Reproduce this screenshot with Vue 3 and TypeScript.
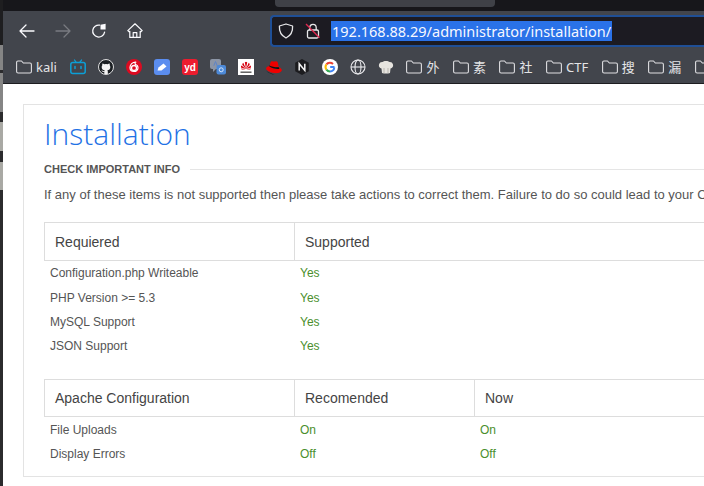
<script setup lang="ts">
type Mark =
  | { kind: 'icon'; name: string }
  | { kind: 'folder'; label: string };

const marks: Mark[] = [
  { kind: 'folder', label: 'kali' },
  { kind: 'icon', name: 'bili' },
  { kind: 'icon', name: 'github' },
  { kind: 'icon', name: 'netease' },
  { kind: 'icon', name: 'note' },
  { kind: 'icon', name: 'yd' },
  { kind: 'icon', name: 'translate' },
  { kind: 'icon', name: 'huawei' },
  { kind: 'icon', name: 'redhat' },
  { kind: 'icon', name: 'notion' },
  { kind: 'icon', name: 'google' },
  { kind: 'icon', name: 'globe' },
  { kind: 'icon', name: 'chef' },
  { kind: 'folder', label: '外' },
  { kind: 'folder', label: '素' },
  { kind: 'folder', label: '社' },
  { kind: 'folder', label: 'CTF' },
  { kind: 'folder', label: '搜' },
  { kind: 'folder', label: '漏' },
  { kind: 'folder', label: '' },
];

const required = [
  ['Configuration.php Writeable', 'Yes'],
  ['PHP Version >= 5.3', 'Yes'],
  ['MySQL Support', 'Yes'],
  ['JSON Support', 'Yes'],
];

const apache = [
  ['File Uploads', 'On', 'On'],
  ['Display Errors', 'Off', 'Off'],
];
</script>

<template>
  <div class="screen">
    <div class="edge">
      <i class="e1"></i>
      <i class="e-grey e2a"></i>
      <i class="e2b"></i>
      <i class="e-grey e2"></i>
      <i class="e3"></i>
      <i class="e-light e4"></i>
      <i class="e5"></i>
      <i class="e-light e6"></i>
      <i class="e7"></i>
    </div>

    <div class="window">
      <div class="tabstrip"><div class="tab"></div></div>

      <div class="toolbar">
        <div class="nav">
          <button class="nav-btn">
            <svg width="16" height="16" viewBox="0 0 16 16" fill="none" stroke="#fbfbfe" stroke-width="1.3" stroke-linecap="round" stroke-linejoin="round"><path d="M15 8H1M7 2 1 8l6 6" /></svg>
          </button>
          <button class="nav-btn">
            <svg width="16" height="16" viewBox="0 0 16 16" fill="none" stroke="#797b81" stroke-width="1.3" stroke-linecap="round" stroke-linejoin="round"><path d="M1 8h14M9 2l6 6-6 6" /></svg>
          </button>
          <button class="nav-btn">
            <svg width="16" height="16" viewBox="0 0 16 16" fill="none"><path d="M13.6 9.2A6 6 0 1 1 8.6 2.1" stroke="#fbfbfe" stroke-width="1.3" stroke-linecap="round" /><path d="M9.500 1.800 14.600 .8V6.400H9.500z" fill="#fbfbfe" /></svg>
          </button>
          <button class="nav-btn">
            <svg width="16" height="16" viewBox="0 0 16 16" fill="none" stroke="#fbfbfe" stroke-width="1.2" stroke-linejoin="round"><path d="M.8 7.6 8 .8l7.2 6.8-1.4 1.2-.6-.5v6.1H2.8V8.3l-.6.5z" /><path d="M6.2 14.4V9.6h3.6v4.8" /></svg>
          </button>
        </div>

        <div class="urlbar">
          <svg class="shield" width="16" height="16" viewBox="0 0 16 16" fill="none" stroke="#e8e8ea" stroke-width="1.3" stroke-linejoin="round"><path d="M8 1 14.6 3c.3 5.4-1.700 9.600-6.600 12C3.100 12.600 1.100 8.400 1.400 3z" /></svg>
          <svg class="lock" width="16" height="16" viewBox="0 0 16 16" fill="none"><path d="M4.800 7V4.500a3.200 3.200 0 0 1 6.400 0V7" stroke="#e8e8ea" stroke-width="1.300" /><rect x="2.500" y="7" width="11" height="8" rx="1.500" stroke="#e8e8ea" stroke-width="1.300" /><path d="M1 1 14.500 14.800" stroke="#e22850" stroke-width="1.300" /></svg>
          <span class="url">192.168.88.29/administrator/installation/</span>
        </div>
      </div>

      <div class="bookmarks">
        <template v-for="(m, i) in marks" :key="i">
          <div v-if="m.kind === 'folder'" class="mark-folder">
            <svg width="16" height="14" viewBox="0 0 16 14" fill="none" stroke="#dfdfe2" stroke-width="1.100" stroke-linejoin="round"><path d="M.6 11.500V2.300Q.6 1 1.900 1H5.500l1.800 2H14q1.400 0 1.400 1.400v7.100q0 1.500-1.400 1.500H2.100q-1.500 0-1.500-1.500z" /></svg>
            <span v-if="m.label" class="mark-label">{{ m.label }}</span>
          </div>

          <div v-else class="mark-icon">
            <svg v-if="m.name === 'bili'" width="16" height="16" viewBox="0 0 16 16" fill="none"><path d="M4.500 1 6 3.200M11.500 1 10 3.200" stroke="#0c9fd6" stroke-width="1.300" stroke-linecap="round" /><rect x=".8" y="3.400" width="14.400" height="11" rx="2" stroke="#0c9fd6" stroke-width="1.500" /><path d="M5 7.500v2M11 7.500v2" stroke="#0c9fd6" stroke-width="1.500" stroke-linecap="round" /></svg>

            <svg v-else-if="m.name === 'github'" width="16" height="16" viewBox="0 0 16 16"><circle cx="8" cy="8" r="7.500" fill="#1b1f23" stroke="#f2f2f2" stroke-width=".9" /><path d="M6.300 15v-2.200C4.200 13.200 3.700 12 3.400 11.200c.8.200 1.300 1 2.900 1 0-.5.200-.8.400-1-1.700-.2-3-1-3-3 0-.8.200-1.400.6-1.900-.1-.5-.1-1.200.1-1.800.7 0 1.300.3 1.900.8a7 7 0 0 1 3.400 0c.6-.5 1.200-.8 1.900-.8.200.6.200 1.300.1 1.800.4.500.6 1.100.6 1.900 0 2-1.300 2.800-3 3 .3.300.5.700.5 1.300V15z" fill="#f4f4f4" /></svg>

            <svg v-else-if="m.name === 'netease'" width="16" height="16" viewBox="0 0 16 16" fill="none"><circle cx="8" cy="8" r="8" fill="#dd0a20" /><circle cx="8" cy="9" r="2.500" stroke="#fff" stroke-width="1.300" /><path d="M9.800 3.200C6.500 3.100 4 5.400 4 8.600c0 2.300 1.800 3.900 4 3.900s4-1.600 4-3.700c0-1.900-1.400-3.100-2.600-3.300L9 3.900" stroke="#fff" stroke-width="1.200" stroke-linecap="round" /></svg>

            <svg v-else-if="m.name === 'note'" width="16" height="16" viewBox="0 0 16 16"><rect width="16" height="16" rx="3" fill="#5b8def" /><path d="M3.500 11.500 4.500 8.500 9.500 4.500 12.500 7.500 7.500 11.500z" fill="#fff" /></svg>

            <svg v-else-if="m.name === 'yd'" width="16" height="16" viewBox="0 0 16 16"><rect width="16" height="16" rx="3" fill="#ec1c2e" /><text x="8" y="11.500" text-anchor="middle" class="yd-text">yd</text></svg>

            <svg v-else-if="m.name === 'translate'" width="16" height="16" viewBox="0 0 16 16"><rect x="0" y="0" width="11" height="10" rx="2" fill="#8c95a6" /><path d="M3 10v3l3-3z" fill="#8c95a6" /><rect x="6.500" y="6" width="9.500" height="9.500" rx="2" fill="#4c89d8" /><circle cx="11.200" cy="10.800" r="2" fill="none" stroke="#d6e6fa" stroke-width="1" /><path d="M3.800 6.800 5.500 2.500l1.700 4.300" fill="none" stroke="#5d84c8" stroke-width="1" /></svg>

            <svg v-else-if="m.name === 'huawei'" width="16" height="16" viewBox="0 0 16 16"><rect width="16" height="16" fill="#fff" /><g fill="#d7000f"><path d="M8 9.800 6.800 3.200c.6-.4.900-.4 1.200-.5zM8 9.800 9.200 3.200c-.6-.4-.9-.4-1.200-.5zM8 10 5.300 3.800C4.500 4.300 4.200 5 4.400 5.900zM8 10l2.700-6.200c.8.500 1.100 1.200.9 2.100zM8 10 3.500 6.500c-.7.800-.6 1.600-.2 2.200zM8 10l4.500-3.500c.7.800.6 1.600.2 2.200zM7.600 10.200 3 9.400c.2.800.8 1 1.500 1zM8.400 10.200l4.600-.8c-.2.800-.8 1-1.500 1z" /></g><rect x="2.500" y="12.500" width="11" height="1.400" fill="#555" /></svg>

            <svg v-else-if="m.name === 'redhat'" width="16" height="16" viewBox="0 0 16 16"><path d="M3.200 8.400 4.400 3.800C4.700 2.700 5.500 2 6.500 2.300c1 .3 1.600.5 2.800.1 1.200-.4 2.200.2 2.500 1.300l1 4.200z" fill="#e00" /><path d="M.1 9.500c0 1.800 3.800 4 8 4.600 3.900.5 7.700-.6 7.700-3 0-1.100-1.400-2.400-3-3.100l.3 1.300c0 1.500-8.600-.2-10-2.300C1.300 7.400.1 8.300.1 9.500z" fill="#e00" /><path d="M2.900 7C4.600 8.700 9.500 10 12.900 10.100c.8 0 .5-1.100-.2-1.800-3.200.2-7.100-.6-9.500-1.800z" fill="#111" /><path d="M0 11.500C2 14 6 15.800 10 15.800c-2-.2-7-1.800-10-4.300z" fill="#111" /></svg>

            <svg v-else-if="m.name === 'notion'" width="16" height="16" viewBox="0 0 16 16"><path d="M8 0 14.800 3.800v8.400L8 16 1.200 12.200V3.800z" fill="#1c1c1f" /><path d="M5.200 11.500V4.700L10.800 11.500V4.700" fill="none" stroke="#f4f4f4" stroke-width="1.500" /></svg>

            <svg v-else-if="m.name === 'google'" width="16" height="16" viewBox="0 0 16 16" fill="none"><circle cx="8" cy="8" r="8" fill="#fff" /><path d="M12.500 8H8.200" stroke="#4285f4" stroke-width="2" /><path d="M12.300 8.500A4.500 4.500 0 0 1 8 12.500" stroke="#4285f4" stroke-width="2" /><path d="M11 4.900A4.500 4.500 0 0 0 4.400 5.400" stroke="#ea4335" stroke-width="2" /><path d="M4.400 5.400a4.500 4.500 0 0 0 0 5.200" stroke="#fbbc05" stroke-width="2" /><path d="M4.400 10.600A4.500 4.500 0 0 0 8 12.500" stroke="#34a853" stroke-width="2" /></svg>

            <svg v-else-if="m.name === 'globe'" width="16" height="16" viewBox="0 0 16 16" fill="none" stroke="#ececef" stroke-width="1.100"><circle cx="8" cy="8" r="7" /><ellipse cx="8" cy="8" rx="3" ry="7" /><path d="M1 8h14" /></svg>

            <svg v-else width="16" height="16" viewBox="0 0 16 16"><path d="M3.500 9.500C1.500 9 .5 7.500 1 5.500 1.500 3.500 3 2.800 4.500 3 5.500 1.500 10.500 1.500 11.500 3c1.500-.2 3 .5 3.500 2.500.5 2-.5 3.500-2.500 4l-.5 4.500c-2.500.8-5.500.8-8 0z" fill="#e6e4df" /><path d="M6 9v5M10 9v5" stroke="#b9b6b0" stroke-width="1" /></svg>
          </div>
        </template>
      </div>

      <div class="page">
        <section class="card">
          <h1 class="title">Installation</h1>

          <div class="section-head">
            <h2>CHECK IMPORTANT INFO</h2>
            <span class="rule"></span>
          </div>

          <p class="lead">If any of these items is not supported then please take actions to correct them. Failure to do so could lead to your CMS not functioning correctly.</p>

          <table class="info first">
            <colgroup>
              <col class="c-name" />
              <col class="c-rec" />
              <col />
            </colgroup>
            <thead>
              <tr>
                <th>Requiered</th>
                <th colspan="2">Supported</th>
              </tr>
            </thead>
            <tbody>
              <tr v-for="row in required" :key="row[0]">
                <td>{{ row[0] }}</td>
                <td class="ok" colspan="2">{{ row[1] }}</td>
              </tr>
            </tbody>
          </table>

          <table class="info second">
            <colgroup>
              <col class="c-name" />
              <col class="c-rec" />
              <col />
            </colgroup>
            <thead>
              <tr>
                <th>Apache Configuration</th>
                <th>Recomended</th>
                <th>Now</th>
              </tr>
            </thead>
            <tbody>
              <tr v-for="row in apache" :key="row[0]">
                <td>{{ row[0] }}</td>
                <td class="ok">{{ row[1] }}</td>
                <td class="ok">{{ row[2] }}</td>
              </tr>
            </tbody>
          </table>
        </section>
      </div>
    </div>
  </div>
</template>

<style>
html,
body {
  margin: 0;
  overflow: hidden;
  background: #fff;
}
</style>

<style scoped>
.screen {
  width: 704px;
  height: 486px;
  display: flex;
  overflow: hidden;
  font-family: "Liberation Sans", Arial, sans-serif;
}

.edge {
  width: 3px;
  flex: none;
  display: flex;
  flex-direction: column;
  background: #2b2b2d;
}
.edge i { display: block; }
.e-grey { background: #858585; }
.e-light { background: #a9a9a4; }
.e1 { height: 45px; background: #1e1e20; }
.e2a { height: 25px; }
.e2b { height: 3px; }
.e2 { height: 39px; }
.e3 { height: 10px; }
.e4 { height: 29px; }
.e5 { height: 11px; }
.e6 { height: 28px; }
.e7 { flex: 1; }

.window {
  flex: 1;
  min-width: 0;
  display: flex;
  flex-direction: column;
}

.tabstrip {
  height: 11px;
  flex: none;
  background: #17171b;
  padding-left: 272px;
}
.tab {
  width: 220px;
  height: 7px;
  background: #3f4147;
  border-radius: 0 0 4px 4px;
}

.toolbar {
  height: 41px;
  flex: none;
  background: #42454c;
  display: flex;
  align-items: flex-start;
  padding: 4px 0 0 6px;
  box-sizing: border-box;
}
.nav {
  display: flex;
  height: 32px;
  align-items: center;
  width: 262px;
  flex: none;
}
.nav-btn {
  width: 36px;
  height: 32px;
  flex: none;
  padding: 0;
  border: none;
  background: none;
  display: flex;
  align-items: center;
  justify-content: center;
}

.urlbar {
  flex: 1;
  height: 32px;
  margin-left: -1px;
  box-sizing: border-box;
  background: #1c1b22;
  border: 2px solid #1f4f96;
  border-right: none;
  border-radius: 4px 0 0 4px;
  display: flex;
  align-items: center;
  padding-left: 6px;
  min-width: 0;
}
.lock { margin-left: 11px; }
.url {
  margin-left: 10px;
  height: 20px;
  line-height: 20px;
  padding: 0 1px;
  background: #2a72e8;
  color: #f6f8ff;
  font-family: "Noto Sans", sans-serif;
  font-size: 14.500px;
  white-space: nowrap;
}

.bookmarks {
  height: 32px;
  flex: none;
  box-sizing: border-box;
  background: #42454c;
  border-bottom: 1px solid #1d1d20;
  padding: 0 0 1px 13px;
  display: flex;
  align-items: center;
  overflow: hidden;
}
.mark-icon {
  width: 16px;
  height: 16px;
  flex: none;
  margin-right: 12px;
  display: flex;
}
.mark-folder {
  flex: none;
  display: flex;
  align-items: center;
  gap: 4px;
  margin-right: 13.500px;
}
.mark-label {
  color: #e4e4e6;
  font-family: "Noto Sans", "Noto Sans CJK SC", sans-serif;
  font-size: 13px;
  line-height: 18px;
}
.yd-text {
  fill: #fff;
  font-family: "Liberation Sans", sans-serif;
  font-size: 10px;
  font-weight: 700;
}

.page {
  flex: 1;
  min-height: 0;
  background: #fff;
  padding: 20px 0 0 20px;
  overflow: hidden;
}

.card {
  width: 760px;
  height: 373px;
  box-sizing: border-box;
  border: 1px solid #e3e3e3;
  padding: 0 20px;
}

.title {
  margin: 9px 0 0;
  font-family: "Open Sans", sans-serif;
  font-weight: 300;
  font-size: 30px;
  line-height: 40px;
  color: #1f72e5;
}

.section-head {
  display: flex;
  align-items: center;
  gap: 10px;
  margin-top: 7px;
  height: 16px;
}
.section-head h2 {
  margin: 0;
  font-size: 11px;
  font-weight: 700;
  color: #555;
  white-space: nowrap;
}
.rule {
  flex: 1;
  height: 1px;
  background: #e5e5e5;
}

.lead {
  margin: 9px 0 0;
  font-size: 13px;
  line-height: 18px;
  color: #555;
  white-space: nowrap;
}

.info {
  width: 100%;
  table-layout: fixed;
  border-collapse: collapse;
}
.c-name { width: 250px; }
.c-rec { width: 180px; }
.info.first { margin-top: 18px; }
.info.second { margin-top: 21px; }

.info th {
  height: 37px;
  padding: 0 10px;
  box-sizing: border-box;
  border: 1px solid #ddd;
  font-size: 14px;
  font-weight: 400;
  color: #444;
  text-align: left;
}
.info.first th { height: 38px; }

.info td {
  box-sizing: border-box;
  height: 24.300px;
  padding: 1.200px 5.500px 0;
  font-size: 12px;
  color: #555;
}
.info.second td { padding-top: 2.200px; }
.info td.ok { color: #4a8f2c; }
</style>
